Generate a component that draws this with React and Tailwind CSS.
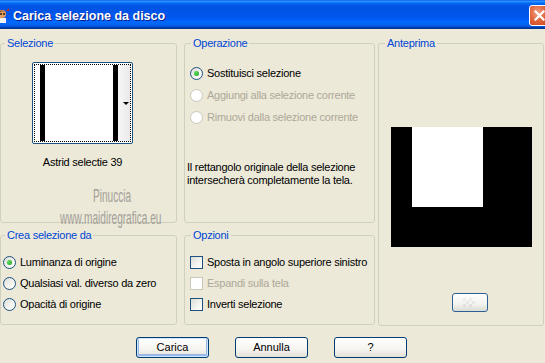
import clsx from 'clsx'

function Radio({ checked, disabled, label, offset }) {
	return (
		<div className={clsx('flex items-center h-[21px]', offset)}>
			<span
				className={clsx(
					'w-[13px] h-[13px] rounded-full border flex items-center justify-center shrink-0',
					disabled
						? 'border-[#CAC8BB] bg-white'
						: 'border-[#1C5180] bg-[linear-gradient(135deg,#DCDCD7_0%,#F4F4F0_60%,#FFFFFF_100%)]'
				)}
			>
				{checked && <span className="w-[5px] h-[5px] rounded-full bg-[radial-gradient(circle_at_35%_35%,#5EDB5E,#21A121)]" />}
			</span>
			<span className={clsx('ml-[4px] whitespace-nowrap', disabled ? 'text-[#ACA899]' : 'text-black')}>{label}</span>
		</div>
	)
}

function Check({ disabled, label }) {
	return (
		<div className="flex items-center h-[21px] ml-[5px]">
			<span
				className={clsx(
					'w-[13px] h-[13px] border shrink-0',
					disabled
						? 'border-[#CAC8BB] bg-white'
						: 'border-[#1C5180] bg-[linear-gradient(135deg,#DCDCD7_0%,#F4F4F0_60%,#FFFFFF_100%)]'
				)}
			/>
			<span className={clsx('ml-[4px] whitespace-nowrap', disabled ? 'text-[#ACA899]' : 'text-black')}>{label}</span>
		</div>
	)
}

function Group({ title, className, legendOffset = 'ml-[6px]', children }) {
	return (
		<fieldset className={clsx('border border-[#D0D0BF] rounded-[3px] min-w-0', className)}>
			<legend className={clsx('px-[2px] text-[11px] leading-[13px] text-[#0046D5]', legendOffset)}>{title}</legend>
			{children}
		</fieldset>
	)
}

function XpButton({ children, isDefault }) {
	return (
		<button
			className={clsx(
				'w-[73px] h-[21px] rounded-[3px] border border-[#003C74] text-[11px] text-black bg-[linear-gradient(to_bottom,#FFFFFF_0%,#F5F4EF_60%,#E3E0D6_100%)]',
				isDefault && 'shadow-[inset_0_0_0_1px_#CEE7FF,inset_0_-1px_0_2px_#98B8EA]'
			)}
		>
			{children}
		</button>
	)
}

export default function App() {
	return (
		<div className="w-[545px] h-[363px] overflow-hidden bg-[#ECE9D8] font-['Liberation_Sans',Arial,sans-serif] text-[11px] leading-[13px] tracking-[-0.25px] select-none">
			{/* Title bar */}
			<div className="h-[29px] flex items-center relative bg-[linear-gradient(to_bottom,#0058EE_0%,#3593FF_4%,#288EFF_6%,#127DFF_8%,#036FFC_10%,#0262EE_14%,#0057E5_20%,#0054E3_24%,#0055EB_56%,#005BF5_66%,#026AFE_76%,#0062EF_86%,#0052D6_92%,#0040AB_94%,#003092_100%)]">
				<svg width="16" height="16" viewBox="0 0 16 16" className="ml-[-7px] mt-[2px] shrink-0">
					<circle cx="9" cy="6" r="4" fill="#E8A060" />
					<path d="M5 5 Q9 0 13 5 L12 4 Q9 2 6 5 Z" fill="#7A3A10" />
					<rect x="6" y="10" width="7" height="5" fill="#F2F2F2" />
					<circle cx="8" cy="6" r="1" fill="#2A1A0A" />
					<circle cx="11" cy="6" r="1" fill="#2A1A0A" />
					<path d="M13 3 L16 0 L16 3 Z" fill="#C03020" />
				</svg>
				<span className="ml-[4px] mt-[3px] text-[12.5px] font-bold text-white tracking-normal [text-shadow:1px_1px_0_#0A1E8A]">
					Carica selezione da disco
				</span>
				<div className="absolute left-[529px] top-[5px] w-[21px] h-[21px] rounded-[3px] border border-white bg-[radial-gradient(circle_at_40%_35%,#F2A088_0%,#E2683F_45%,#C8401E_100%)] flex items-center justify-center">
					<svg width="11" height="11" viewBox="0 0 11 11">
						<path d="M1.5 1.5 L9.5 9.5 M9.5 1.5 L1.5 9.5" stroke="white" strokeWidth="2.2" strokeLinecap="square" />
					</svg>
				</div>
			</div>

			{/* Body */}
			<div className="flex pt-[8px]">
				<div className="flex flex-col w-[177px]">
					<Group title="Selezione" legendOffset="ml-[4px]" className="h-[186px]">
						<div className="w-[163px] flex flex-col items-center">
							<div className="mt-[12px] w-[101px] h-[82px] rounded-[2px] border border-[#1C5180] bg-white p-[1px]">
								<div className="h-full border border-dotted border-black flex">
									<div className="w-[5px] bg-white" />
									<div className="w-[5px] bg-black" />
									<div className="w-[68px] bg-white" />
									<div className="w-[5px] bg-black" />
									<div className="w-[12px] bg-[linear-gradient(to_right,#F7F7F7,#E9E9E9)] flex items-center justify-end pr-[1px]">
										<div className="w-0 h-0 border-l-[3px] border-r-[3px] border-t-[3px] border-l-transparent border-r-transparent border-t-black" />
									</div>
								</div>
							</div>
							<div className="mt-[12px] text-black">Astrid selectie 39</div>
						</div>
						<div className="mt-[18px] ml-[92px] text-[18px] leading-none text-[#A3A098] tracking-normal scale-x-56 origin-left whitespace-nowrap">
							Pinuccia
						</div>
						<div className="mt-[4px] ml-[59px] text-[18px] leading-none text-[#A3A098] tracking-normal scale-x-56 origin-left whitespace-nowrap">
							www.maidiregrafica.eu
						</div>
					</Group>
					<Group title="Crea selezione da" legendOffset="ml-[4px]" className="h-[96px] mt-[6px]">
						<div className="mt-[10px]">
							<Radio checked label="Luminanza di origine" offset="ml-[2px]" />
							<Radio label="Qualsiasi val. diverso da zero" offset="ml-[2px]" />
							<Radio label="Opacità di origine" offset="ml-[2px]" />
						</div>
					</Group>
				</div>

				<div className="flex flex-col w-[191px] ml-[7px]">
					<Group title="Operazione" className="h-[186px]">
						<div className="mt-[12px]">
							<div className="h-[22px] flex items-center"><Radio checked label="Sostituisci selezione" offset="ml-[5px]" /></div>
							<div className="h-[22px] flex items-center"><Radio disabled label="Aggiungi alla selezione corrente" offset="ml-[5px]" /></div>
							<div className="h-[22px] flex items-center"><Radio disabled label="Rimuovi dalla selezione corrente" offset="ml-[5px]" /></div>
						</div>
						<p className="mt-[33px] ml-[2px] text-black">
							Il rettangolo originale della selezione
							<br />
							intersecherà completamente la tela.
						</p>
					</Group>
					<Group title="Opzioni" className="h-[96px] mt-[6px]">
						<div className="mt-[10px]">
							<Check label="Sposta in angolo superiore sinistro" />
							<Check disabled label="Espandi sulla tela" />
							<Check label="Inverti selezione" />
						</div>
					</Group>
				</div>

				<Group title="Anteprima" className="w-[166px] h-[289px] ml-[3px]">
					<div className="mt-[77px] ml-[12px] w-[141px] h-[120px] bg-black">
						<div className="ml-[21px] w-[71px] h-[80px] bg-white" />
					</div>
					<div className="mt-[46px] ml-[73px] w-[36px] h-[19px] rounded-[3px] border border-[#2C5F93] bg-[linear-gradient(to_bottom,#FFFFFF,#F2F2EE_60%,#DCDCD6)] flex items-center justify-center">
						<svg width="22" height="11" viewBox="0 0 22 11" className="opacity-60">
							<rect x="4" y="1" width="3" height="3" fill="#E6E6E6" />
							<rect x="10" y="1" width="3" height="3" fill="#E6E6E6" />
							<rect x="7" y="4" width="3" height="3" fill="#E0E0E0" />
							<rect x="13" y="4" width="3" height="3" fill="#E0E0E0" />
							<rect x="4" y="7" width="3" height="3" fill="#D8D8D8" />
							<rect x="10" y="7" width="3" height="3" fill="#D8D8D8" />
						</svg>
					</div>
				</Group>
			</div>

			{/* Buttons */}
			<div className="flex mt-[11px] ml-[136px] gap-[26px] tracking-normal">
				<XpButton isDefault>Carica</XpButton>
				<XpButton>Annulla</XpButton>
				<XpButton>?</XpButton>
			</div>
		</div>
	)
}
